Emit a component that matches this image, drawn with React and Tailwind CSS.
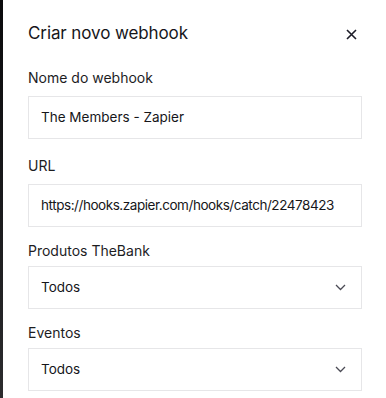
import React from "react";

function Field({ label, value, select, labelClass, boxClass, valueClass }) {
  return (
    <div className="flex flex-col min-w-0">
      <label className={`text-[14px] leading-[20px] text-[#1d1d1f] ${labelClass}`}>{label}</label>
      <div
        className={`h-[43px] min-w-0 overflow-hidden border border-[#e6e6e8] bg-white flex items-center justify-between pl-[12px] pr-[14px] ${boxClass}`}
      >
        <span className={`text-[13.5px] text-[#16161a] whitespace-nowrap ${valueClass}`}>{value}</span>
        {select && (
          <svg width="11" height="7" viewBox="0 0 11 7" fill="none" className="shrink-0 mr-[1px]">
            <path d="M1 1l4.5 4.5L10 1" stroke="#4b4b55" strokeWidth="1.3" />
          </svg>
        )}
      </div>
    </div>
  );
}

export default function App() {
  return (
    <div
      className="flex w-[386px] h-[398px] overflow-hidden bg-white"
      style={{ fontFamily: "Inter, 'Noto Sans', sans-serif" }}
    >
      <div className="w-[3px] shrink-0 bg-gradient-to-b from-[#0a0a0c] via-[#1a1a1c] to-[#2c2c2e]" />
      <div className="flex-1 min-w-0 pl-[25px] pr-[24px] pt-[22px] flex flex-col">
        <div className="flex items-center justify-between h-[24px]">
          <h2 className="text-[17px] text-[#16161a] tracking-[-0.1px]">Criar novo webhook</h2>
          <svg width="11" height="11" viewBox="0 0 11 11" className="mr-[5px]">
            <path d="M1 1l9 9M10 1l-9 9" stroke="#1d1d28" strokeWidth="1.6" />
          </svg>
        </div>
        <div className="mt-[22px] flex flex-col min-w-0">
          <Field label="Nome do webhook" value="The Members - Zapier" boxClass="mt-[8px]" />
          <Field
            label="URL"
            value="https://hooks.zapier.com/hooks/catch/22478423"
            labelClass="mt-[17px]"
            boxClass="mt-[8px]"
            valueClass="tracking-[-0.45px]"
          />
          <Field label="Produtos TheBank" value="Todos" select labelClass="mt-[14px]" boxClass="mt-[5px]" />
          <Field label="Eventos" value="Todos" select labelClass="mt-[14px]" boxClass="mt-[5px]" />
        </div>
      </div>
    </div>
  );
}
